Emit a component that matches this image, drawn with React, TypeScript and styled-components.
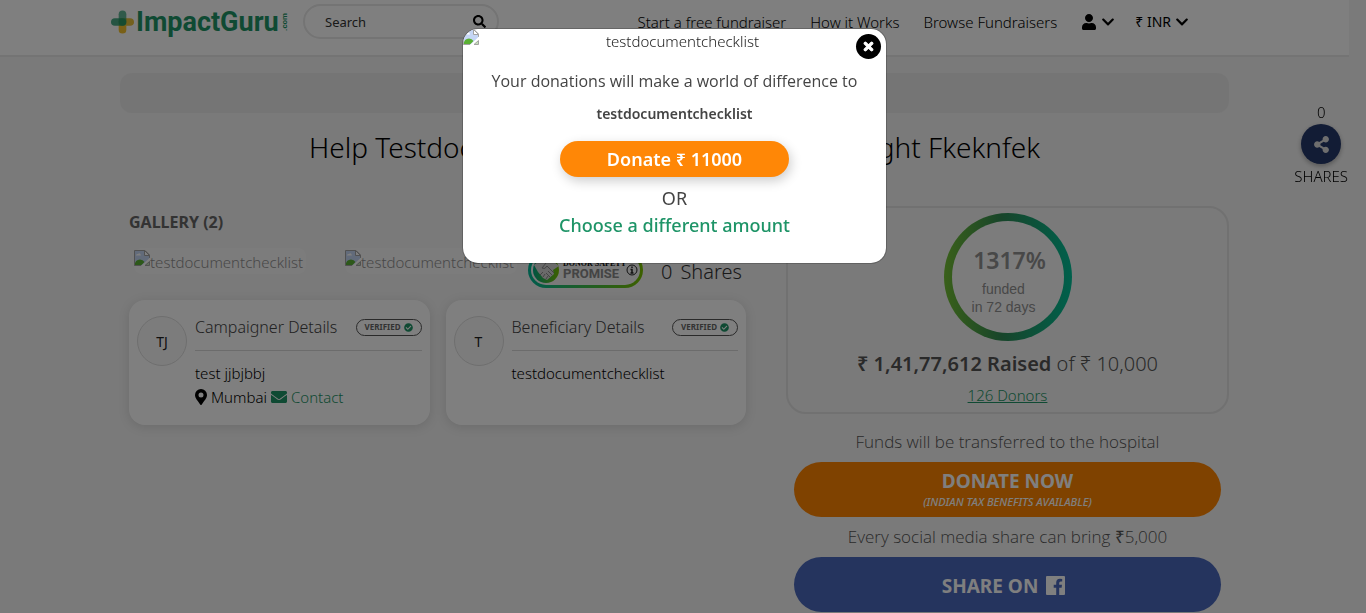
import React from "react";
import styled, { createGlobalStyle } from "styled-components";
import {
  FaUser,
  FaChevronDown,
  FaSearch,
  FaEnvelope,
  FaCheckCircle,
  FaShareAlt,
  FaTimes,
} from "react-icons/fa";

const sans = '"Noto Sans", "Open Sans", sans-serif';

const GlobalStyle = createGlobalStyle`
  *, *::before, *::after { box-sizing: border-box; }
  html, body { margin: 0; padding: 0; overflow: hidden; }
  body {
    background: #f4f4f4;
    color: #212121;
    font: 300 15px/24px ${sans};
  }
  h1, h2, h3, p { margin: 0; font-weight: 300; }
  a { text-decoration: none; color: inherit; }
  button { font-family: inherit; border: 0; cursor: pointer; }
  svg { flex: none; }
`;

const Page = styled.div`
  margin-right: 17px;
  min-height: 100vh;
`;

const Header = styled.header`
  display: flex;
  align-items: center;
  height: 57px;
  padding: 0 160px 12px 111px;
  background: #fff;
  border-bottom: 2px solid #e8e8e8;
`;

const Logo = styled.a`
  display: flex;
  align-items: center;
  gap: 2px;
  width: 177px;
  color: #1e9467;
  font: 700 27px/36px Roboto, sans-serif;
`;

const LogoSuffix = styled.span`
  font: 700 8px/8px Roboto, sans-serif;
  writing-mode: vertical-rl;
  rotate: 180deg;
`;

const SearchBox = styled.form`
  display: flex;
  align-items: center;
  width: 196px;
  height: 35px;
  margin-left: 15px;
  padding: 0 11px 0 20px;
  border: 2px solid #e8e8e8;
  border-radius: 18px;
`;

const SearchInput = styled.input`
  flex: 1;
  min-width: 0;
  padding: 0;
  border: 0;
  outline: 0;
  background: transparent;
  font: 400 13px/20px ${sans};
  &::placeholder { color: #333; opacity: 1; }
`;

const IconButton = styled.button`
  display: flex;
  align-items: center;
  gap: 4px;
  padding: 0;
  background: none;
  color: #000;
  font: 400 14px/24px ${sans};
`;

const Nav = styled.nav`
  display: flex;
  align-items: center;
  gap: 24px;
  margin-left: auto;
  color: #000;
  font-size: 15px;
  white-space: nowrap;
`;

const NavMenus = styled.div`
  display: flex;
  gap: 20px;
`;

const Main = styled.main`
  padding: 16px 120px 0;
`;

const Banner = styled.div`
  height: 40px;
  border-radius: 12px;
  background: #ebebeb;
`;

const Title = styled.h1`
  padding-top: 14px;
  color: #000;
  font-size: 28px;
  line-height: 40px;
  text-align: center;
  white-space: nowrap;
`;

const Columns = styled.div`
  display: flex;
  gap: 40px;
  align-items: flex-start;
  padding-top: 39px;
`;

const Story = styled.section`
  flex: 617;
  min-width: 0;
  padding-left: 9px;
  box-sizing: content-box;
`;

const Funding = styled.aside`
  flex: 443;
  min-width: 0;
`;

const GalleryTitle = styled.h2`
  padding-top: 4px;
  color: #666;
  font-size: 16px;
  font-weight: 700;
  line-height: 24px;
`;

const MediaRow = styled.div`
  display: flex;
  padding: 14px 0 0 5px;
`;

const Thumb = styled.div`
  display: flex;
  width: 172px;
  height: 26px;
  margin-right: 39px;
  padding-top: 2px;
  border-radius: 8px;
  background: #f9f9f9;
  color: #909090;
  font-size: 15px;
  line-height: 24px;
  white-space: nowrap;
  & + & { margin-right: 11px; }
`;

const SafetyBadge = styled.div`
  display: flex;
  align-items: center;
  gap: 3px;
  width: 115px;
  height: 36px;
  margin-top: 4px;
  padding: 0 2px;
  border: 3px solid transparent;
  border-radius: 18px;
  background:
    linear-gradient(#f4f4f4, #f4f4f4) padding-box,
    linear-gradient(90deg, #00b898, #7ac000) border-box;
`;

const BadgeText = styled.div`
  flex: 1;
  min-width: 0;
  color: #888;
  font: 700 13px/12px Roboto, sans-serif;
  white-space: nowrap;
`;

const BadgeTop = styled.div`
  color: #111;
  font: 700 8px/8px "Liberation Serif", serif;
`;

const ShareCount = styled.p`
  margin: 10px 0 0 18px;
  color: #333;
  font-size: 20px;
  line-height: 28px;
  white-space: nowrap;
`;

const ShareNumber = styled.span`
  margin-right: 8px;
`;

const Cards = styled.div`
  display: grid;
  grid-template-columns: 1fr 1fr;
  gap: 16px;
  margin-top: 12px;
`;

const Card = styled.article`
  display: flex;
  gap: 8px;
  min-height: 125px;
  padding: 16px 8px;
  border-radius: 16px;
  background: #fff;
  box-shadow: 0 2px 12px rgba(0, 0, 0, 0.12);
`;

const Avatar = styled.div`
  flex: none;
  width: 50px;
  height: 50px;
  border: 1px solid #ddd;
  border-radius: 50%;
  background: #f9f9f9;
  font-size: 14px;
  font-weight: 400;
  line-height: 50px;
  text-align: center;
`;

const CardBody = styled.div`
  flex: 1;
  min-width: 0;
  color: #000;
  font-size: 15px;
`;

const CardHead = styled.div`
  display: flex;
  align-items: center;
  justify-content: space-between;
  height: 35px;
  margin-bottom: 10px;
  padding-bottom: 12px;
  border-bottom: 1px solid #d8d8d8;
  white-space: nowrap;
`;

const CardTitle = styled.h3`
  color: #444;
  font-size: 16px;
  line-height: 22px;
`;

const Verified = styled.span`
  display: flex;
  align-items: center;
  gap: 3px;
  height: 17px;
  padding: 0 8px;
  border: 1px solid #555;
  border-radius: 9px;
  color: #666;
  font-size: 8px;
  font-weight: 700;
  svg { color: #1e9467; }
`;

const Place = styled.p`
  display: flex;
  align-items: center;
  gap: 4px;
`;

const GreenLink = styled.a<{ $size?: number; $underline?: boolean }>`
  color: #1e9467;
  font-size: ${(p) => p.$size ?? 15}px;
  text-decoration: ${(p) => (p.$underline ? "underline" : "none")};
`;

const ContactLink = styled(GreenLink)`
  display: flex;
  align-items: center;
  gap: 4px;
`;

const Goal = styled.div`
  display: flex;
  flex-direction: column;
  align-items: center;
  min-height: 208px;
  padding-top: 5px;
  border: 2px solid #e2e2e2;
  border-radius: 20px;
`;

const Ring = styled.div`
  width: 128px;
  height: 128px;
  padding: 8px;
  border-radius: 50%;
  background: linear-gradient(90deg, #74c034, #2f8a54 45%, #00c098);
`;

const RingInner = styled.div`
  height: 112px;
  padding: 23px 8px 0 0;
  border-radius: 50%;
  background: #f9f9f9;
  color: #909090;
  font: 400 14px/18px "Liberation Sans", sans-serif;
  text-align: center;
  white-space: nowrap;
`;

const Percent = styled.strong`
  display: block;
  padding: 0 0 4px 12px;
  font: 600 23px/32px ${sans};
`;

const Raised = styled.p`
  padding-top: 5px;
  color: #555;
  font-size: 20px;
  line-height: 36px;
  white-space: nowrap;
  strong { font-weight: 600; }
`;

const DonorLine = styled.p`
  padding-top: 1px;
`;

const Actions = styled.div`
  padding: 0 8px;
`;

const HandNote = styled.p`
  height: 40px;
  padding-top: 4px;
  color: #555;
  font: 300 17px/32px "Open Sans", sans-serif;
  text-align: center;
  white-space: nowrap;
`;

const FirstNote = styled(HandNote)`
  height: 48px;
  padding-top: 12px;
`;

const ActionButton = styled.button<{ $color: string }>`
  display: flex;
  flex-direction: column;
  align-items: center;
  justify-content: center;
  width: 100%;
  height: 55px;
  padding: 0;
  border-radius: 28px;
  background: ${(p) => p.$color};
  color: #fff;
  font-size: 19px;
  font-weight: 700;
  line-height: 24px;
`;

const ButtonNote = styled.em`
  font-size: 11px;
  font-weight: 500;
  line-height: 18px;
`;

const ShareLabel = styled.span`
  display: flex;
  align-items: center;
  gap: 8px;
  padding: 2px 8px 0 0;
`;

const ShareWidget = styled.div`
  position: fixed;
  top: 100px;
  right: 18px;
  display: flex;
  flex-direction: column;
  align-items: center;
  color: #000;
`;

const ShareButton = styled.button`
  display: flex;
  align-items: center;
  justify-content: center;
  width: 40px;
  height: 40px;
  padding: 0;
  border-radius: 50%;
  background: #24386a;
  color: #ddd;
  box-shadow: 0 2px 5px rgba(0, 0, 0, 0.3);
`;

const Backdrop = styled.div`
  position: fixed;
  inset: 0;
  padding: 28px 17px 0 0;
  background: rgba(0, 0, 0, 0.5);
`;

const Modal = styled.div`
  position: relative;
  width: 425px;
  margin: 0 auto;
  padding-bottom: 24px;
  border: 1px solid rgba(0, 0, 0, 0.2);
  border-radius: 16px;
  background: #fff;
  background-clip: padding-box;
  color: #444;
  text-align: center;
  overflow: hidden;
`;

const ModalImage = styled.div`
  display: flex;
  height: 26px;
  color: #222;
  font-size: 15px;
  line-height: 24px;
  span { flex: 1; }
`;

const CloseButton = styled.button`
  position: absolute;
  top: 5px;
  right: 5px;
  display: flex;
  align-items: center;
  justify-content: center;
  width: 25px;
  height: 25px;
  padding: 0;
  border-radius: 50%;
  background: #000;
  color: #fff;
`;

const ModalNote = styled.p`
  padding-top: 10px;
  color: #444;
  font: 400 16px/32px "Open Sans", sans-serif;
  white-space: nowrap;
`;

const ModalName = styled.p`
  padding: 5px 0 15px;
  font-size: 14px;
  font-weight: 600;
`;

const DonateButton = styled.button`
  display: block;
  width: 229px;
  height: 36px;
  margin: 0 auto 8px;
  padding: 0;
  border-radius: 18px;
  background: #ff8706;
  color: #fff;
  font-size: 18px;
  font-weight: 600;
  line-height: 36px;
  box-shadow: 2px 4px 12px rgba(0, 0, 0, 0.2);
`;

const ModalChoice = styled.p`
  font-size: 18px;
  font-weight: 400;
  line-height: 27px;
  a { font-weight: 500; }
`;

const LogoMark = () => (
  <svg width="23" height="24" viewBox="0 0 24 24" aria-hidden="true">
    <rect x="8" y="8" width="8" height="16" rx="4" fill="#f3c12f" />
    <rect x="8" y="8" width="16" height="8" rx="4" fill="#e6c03a" />
    <rect x="0" y="8" width="16" height="8" rx="4" fill="#1e9467" opacity="0.8" />
    <rect x="8" y="0" width="8" height="16" rx="4" fill="#1e9467" opacity="0.7" />
  </svg>
);

const BrokenImage = () => (
  <svg width="16" height="16" viewBox="0 0 16 16" aria-hidden="true">
    <path d="M0.500 0.500H11L15.500 5V9L8.500 15.500H0.500Z" fill="#c5d6f5" />
    <path d="M2 5.500Q2 3.500 4 4Q6 2 7 5.500Z" fill="#fff" />
    <path d="M0.500 15.500Q1 9.500 6 9.500Q9 9.500 10.500 12L7 15.500Z" fill="#5ab034" />
    <path d="M0.500 15.500V0.500H11L15.500 5V8M0.500 15.500H7" fill="none" stroke="#a2a2a2" />
    <path d="M10.500 0.500V5.500H15.500Z" fill="#fff" stroke="#a2a2a2" />
    <path d="M7 16L16 7.500V10L10 16Z" fill="#fff" />
    <path d="M11 15.500H15.500V11.500Z" fill="#c5e0b8" stroke="#a2a2a2" />
  </svg>
);

const PinIcon = () => (
  <svg width="12" height="16" viewBox="0 0 12 16" aria-hidden="true">
    <path
      fill="#000"
      fillRule="evenodd"
      d="M6 0A6 6 0 0 1 12 6C12 9 9.500 11.500 6.600 15.700Q6 16.300 5.400 15.700C2.500 11.500 0 9 0 6A6 6 0 0 1 6 0ZM6 3.500A2.500 2.500 0 1 0 6 8.500A2.500 2.500 0 1 0 6 3.500Z"
    />
  </svg>
);

const Handshake = () => (
  <svg width="27" height="28" viewBox="0 0 27 28" aria-hidden="true">
    <defs>
      <linearGradient id="shake">
        <stop offset="0" stopColor="#00a884" />
        <stop offset="1" stopColor="#7ac000" />
      </linearGradient>
    </defs>
    <circle cx="13" cy="14" r="13" fill="url(#shake)" />
    <path d="M1 9L6 5L13 6L20 5L26 10L20 14L21 18L14 24L10 22L5 16Z" fill="#d4d4d4" />
    <path
      d="M13 7L9 12Q12 14 14 10L21 17M10 16L7 19M12 18L10 21M15 20L13 23M15 15L19 19M13 17L17 21"
      fill="none"
      stroke="#8a8a8a"
    />
  </svg>
);

const InfoIcon = () => (
  <svg width="12" height="12" viewBox="0 0 12 12" aria-hidden="true">
    <circle cx="6" cy="6" r="5" fill="none" stroke="#222" />
    <path d="M6 2.500V4M4.500 5.500H6V9M4.500 9H7.500" fill="none" stroke="#222" strokeWidth="1.500" />
  </svg>
);

const FacebookIcon = () => (
  <svg width="19" height="19" viewBox="0 0 19 19" aria-hidden="true">
    <path
      fill="#fff"
      d="M1 0H18Q19 0 19 1V18Q19 19 18 19H13.200V11.700H15.600L16 8.800H13.200V7Q13.200 5.500 14.700 5.500H16.200V3Q15.200 2.800 14 2.800Q10.200 2.800 10.200 6.700V8.800H7.700V11.700H10.200V19H1Q0 19 0 18V1Q0 0 1 0Z"
    />
  </svg>
);

const PersonCard = ({
  initials,
  heading,
  name,
  place,
}: {
  initials: string;
  heading: string;
  name: string;
  place?: string;
}) => (
  <Card>
    <Avatar>{initials}</Avatar>
    <CardBody>
      <CardHead>
        <CardTitle>{heading}</CardTitle>
        <Verified>
          VERIFIED <FaCheckCircle size={9} />
        </Verified>
      </CardHead>
      <p>{name}</p>
      {place && (
        <Place>
          <PinIcon />
          {place}
          <ContactLink href="#contact">
            <FaEnvelope size={16} /> Contact
          </ContactLink>
        </Place>
      )}
    </CardBody>
  </Card>
);

export default function App() {
  return (
    <>
      <GlobalStyle />
      <Page>
        <Header>
          <Logo href="#home" aria-label="ImpactGuru.com">
            <LogoMark />
            <span>ImpactGuru</span>
            <LogoSuffix>.com</LogoSuffix>
          </Logo>
          <SearchBox>
            <SearchInput type="text" placeholder="Search" aria-label="Search" />
            <IconButton type="button" aria-label="Submit search">
              <FaSearch size={13} />
            </IconButton>
          </SearchBox>
          <Nav>
            <a href="#start">Start a free fundraiser</a>
            <a href="#how">How it Works</a>
            <a href="#browse">Browse Fundraisers</a>
            <NavMenus>
              <IconButton type="button" aria-label="Account">
                <FaUser size={16} />
                <FaChevronDown size={14} />
              </IconButton>
              <IconButton type="button">
                ₹ INR
                <FaChevronDown size={14} />
              </IconButton>
            </NavMenus>
          </Nav>
        </Header>

        <Main>
          <Banner />
          <Title>Help Testdocumentchecklist From Mumbai Fight Fkeknfek</Title>
          <Columns>
            <Story>
              <GalleryTitle>GALLERY (2)</GalleryTitle>
              <MediaRow>
                <Thumb>
                  <BrokenImage />
                  testdocumentchecklist
                </Thumb>
                <Thumb>
                  <BrokenImage />
                  testdocumentchecklist
                </Thumb>
                <SafetyBadge>
                  <Handshake />
                  <BadgeText>
                    <BadgeTop>DONOR SAFETY</BadgeTop>
                    PROMISE
                  </BadgeText>
                  <InfoIcon />
                </SafetyBadge>
                <ShareCount>
                  <ShareNumber>0</ShareNumber>Shares
                </ShareCount>
              </MediaRow>
              <Cards>
                <PersonCard
                  initials="TJ"
                  heading="Campaigner Details"
                  name="test jjbjbbj"
                  place="Mumbai"
                />
                <PersonCard
                  initials="T"
                  heading="Beneficiary Details"
                  name="testdocumentchecklist"
                />
              </Cards>
            </Story>

            <Funding>
              <Goal>
                <Ring>
                  <RingInner>
                    <Percent>1317%</Percent>
                    funded
                    <br />
                    in 72 days
                  </RingInner>
                </Ring>
                <Raised>
                  <strong>₹ 1,41,77,612 Raised</strong> of ₹ 10,000
                </Raised>
                <DonorLine>
                  <GreenLink href="#donors" $underline>
                    126 Donors
                  </GreenLink>
                </DonorLine>
              </Goal>
              <Actions>
                <FirstNote>Funds will be transferred to the hospital</FirstNote>
                <ActionButton type="button" $color="#ff8400">
                  DONATE NOW
                  <ButtonNote>(INDIAN TAX BENEFITS AVAILABLE)</ButtonNote>
                </ActionButton>
                <HandNote>Every social media share can bring ₹5,000</HandNote>
                <ActionButton type="button" $color="#4b69bc">
                  <ShareLabel>
                    SHARE ON <FacebookIcon />
                  </ShareLabel>
                </ActionButton>
              </Actions>
            </Funding>
          </Columns>
        </Main>
      </Page>

      <ShareWidget>
        0
        <ShareButton type="button" aria-label="Share">
          <FaShareAlt size={17} />
        </ShareButton>
        SHARES
      </ShareWidget>

      <Backdrop>
        <Modal role="dialog" aria-modal="true" aria-label="Donate">
          <ModalImage>
            <BrokenImage />
            <span>testdocumentchecklist</span>
          </ModalImage>
          <CloseButton type="button" aria-label="Close">
            <FaTimes size={13} stroke="#fff" strokeWidth={40} />
          </CloseButton>
          <ModalNote>Your donations will make a world of difference to</ModalNote>
          <ModalName>testdocumentchecklist</ModalName>
          <DonateButton type="button">Donate ₹ 11000</DonateButton>
          <ModalChoice>OR</ModalChoice>
          <ModalChoice>
            <GreenLink href="#amount" $size={18}>
              Choose a different amount
            </GreenLink>
          </ModalChoice>
        </Modal>
      </Backdrop>
    </>
  );
}
